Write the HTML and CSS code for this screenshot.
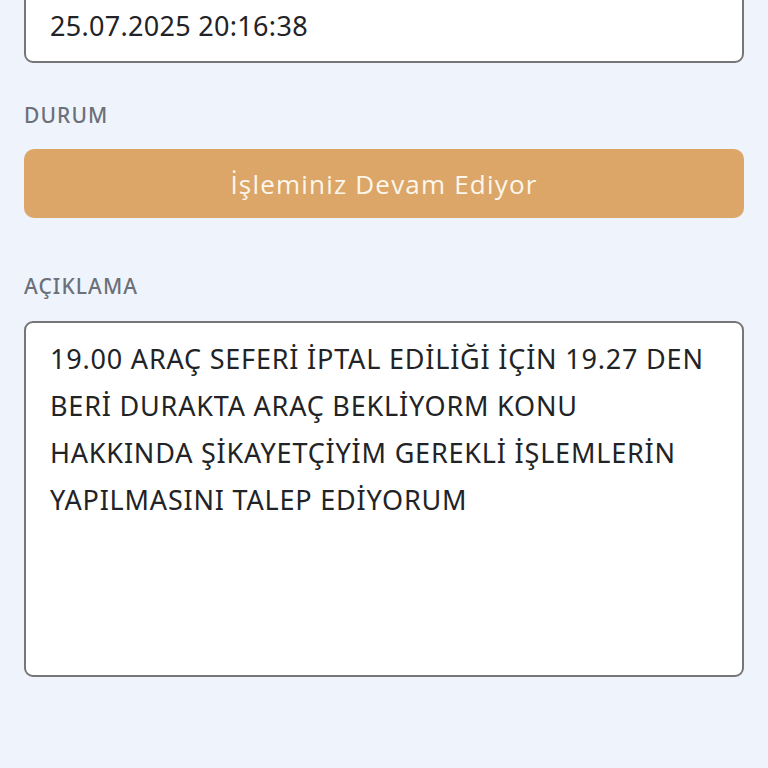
FILE: index.html
```html
<!DOCTYPE html>
<html lang="tr">
<head>
<meta charset="utf-8">
<title>Başvuru Detayı</title>
<link rel="stylesheet" href="styles.css">
</head>
<body>
<main class="page">
  <div class="field-box date-box">25.07.2025 20:16:38</div>
  <div class="label label-durum">DURUM</div>
  <div class="status">İşleminiz Devam Ediyor</div>
  <div class="label label-aciklama">AÇIKLAMA</div>
  <div class="field-box desc-box">19.00 ARAÇ SEFERİ İPTAL EDİLİĞİ İÇİN 19.27 DEN BERİ DURAKTA ARAÇ BEKLİYORM KONU HAKKINDA ŞİKAYETÇİYİM GEREKLİ İŞLEMLERİN YAPILMASINI TALEP EDİYORUM</div>
</main>
</body>
</html>
```
FILE: styles.css
```css
html, body {
  margin: 0;
  padding: 0;
  background: #eff4fc;
  height: 100%;
  overflow: hidden;
}
.page {
  padding: 0 24px;
  display: flex;
  flex-direction: column;
  font-family: "Noto Sans", "Open Sans", sans-serif;
}
.field-box {
  background: #ffffff;
  border: 2px solid #767679;
  border-radius: 9px;
  box-sizing: border-box;
  color: #222326;
}
.date-box {
  margin-top: -19px;
  height: 82px;
  padding: 25px 24px 0;
  line-height: 36px;
  font-size: 27px;
  letter-spacing: 0.3px;
}
.label {
  color: #6c7078;
  font-size: 21px;
  font-weight: 500;
  line-height: 24px;
  letter-spacing: 1.1px;
}
.label-durum {
  margin-top: 40px;
  margin-bottom: 22px;
}
.status {
  height: 69px;
  border-radius: 10px;
  background: #dba667;
  color: #fdf6ec;
  font-family: "Open Sans", "Noto Sans", sans-serif;
  font-size: 26px;
  font-weight: 400;
  letter-spacing: 1.2px;
  display: flex;
  align-items: center;
  justify-content: center;
}
.label-aciklama {
  margin-top: 56px;
  margin-bottom: 23px;
}
.desc-box {
  height: 356px;
  padding: 12px 30px 0 24px;
  line-height: 47px;
  font-size: 27px;
  letter-spacing: 0.8px;
}
```
